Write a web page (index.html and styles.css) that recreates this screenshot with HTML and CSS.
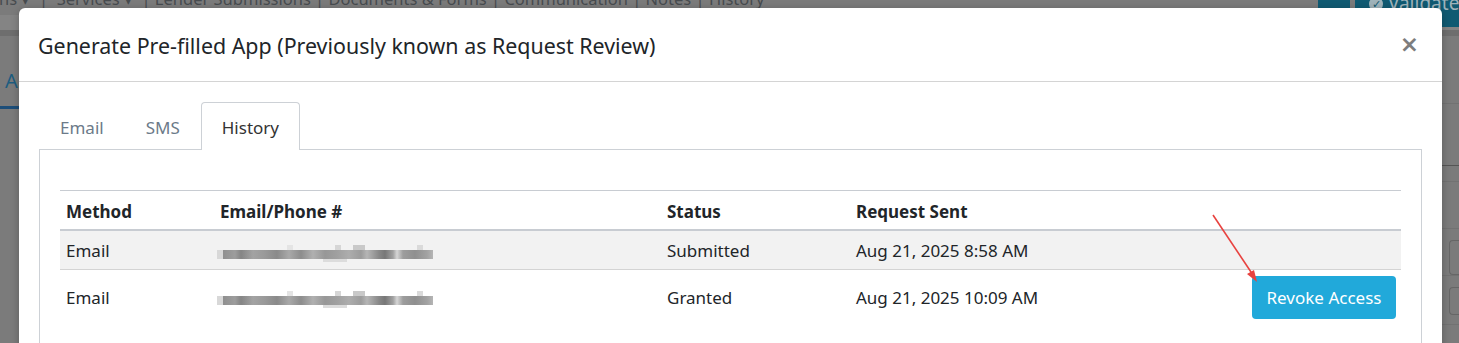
FILE: index.html
```html
<!DOCTYPE html>
<html lang="en">
<head>
    <meta charset="UTF-8">
    <meta name="viewport" content="width=device-width, initial-scale=1.0">
    <title>Generate Pre-filled App</title>
    <link rel="stylesheet" href="styles.css">
</head>
<body>
    <div class="page">
        <div class="topbar">
            <div class="nav-links">ns &#9662; &nbsp;|&nbsp; Services &#9662; &nbsp;|&nbsp;Lender Submissions&nbsp;|&nbsp;Documents &amp; Forms&nbsp;|&nbsp;Communication&nbsp;|&nbsp;Notes&nbsp;|&nbsp;History</div>
            <div class="top-actions">
                <div class="btn-icon"></div>
                <div class="btn-validate"><span class="check">&#10003;</span> Validate</div>
            </div>
        </div>
        <div class="subbar"></div>
        <div class="page-tabs"><span class="page-tab">A</span></div>
        <div class="side-lines">
            <div class="line l1"></div>
            <div class="line l2"></div>
            <div class="line l3"></div>
            <div class="line l4"></div>
            <div class="box b1"></div>
            <div class="line l5"></div>
            <div class="box b2"></div>
            <div class="line l6"></div>
        </div>
    </div>

    <div class="modal">
        <div class="modal-header">
            <h5 class="modal-title">Generate Pre-filled App (Previously known as Request Review)</h5>
            <button class="close">&times;</button>
        </div>
        <div class="modal-body">
            <ul class="tabs">
                <li class="tab">Email</li>
                <li class="tab">SMS</li>
                <li class="tab active">History</li>
            </ul>
            <div class="tab-content">
                <table class="history">
                    <colgroup>
                        <col class="c-method">
                        <col class="c-email">
                        <col class="c-status">
                        <col class="c-sent">
                        <col>
                    </colgroup>
                    <thead>
                        <tr>
                            <th>Method</th>
                            <th>Email/Phone #</th>
                            <th>Status</th>
                            <th>Request Sent</th>
                            <th></th>
                        </tr>
                    </thead>
                    <tbody>
                        <tr class="striped">
                            <td>Email</td>
                            <td><span class="blurred"></span></td>
                            <td>Submitted</td>
                            <td>Aug 21, 2025 8:58 AM</td>
                            <td></td>
                        </tr>
                        <tr>
                            <td>Email</td>
                            <td><span class="blurred"></span></td>
                            <td>Granted</td>
                            <td>Aug 21, 2025 10:09 AM</td>
                            <td class="action"><button class="btn-revoke">Revoke Access</button></td>
                        </tr>
                    </tbody>
                </table>
            </div>
        </div>
        <svg class="arrow" width="60" height="80" viewBox="0 0 60 80">
            <line x1="2" y1="1" x2="42" y2="61" stroke="#e8423f" stroke-width="1.6"/>
            <polygon points="46,68 36,60 43,56" fill="#e8423f"/>
        </svg>
    </div>
</body>
</html>
```

FILE: styles.css
```css
html, body {
    margin: 0;
    padding: 0;
    height: 100%;
    overflow: hidden;
}
body {
    background-color: #7b7b7b;
    font-family: "Segoe UI", "Noto Sans", "Open Sans", sans-serif;
    color: #212529;
}

/* dimmed page behind the modal */
.page {
    position: relative;
    height: 343px;
}
.topbar {
    display: flex;
    justify-content: space-between;
    height: 27px;
    margin-top: -12px;
}
.nav-links {
    font-size: 16.5px;
    color: #474b4f;
    line-height: 22px;
    white-space: nowrap;
    margin-left: -1px;
}
.top-actions {
    display: flex;
    gap: 5px;
    flex-shrink: 0;
}
.btn-icon {
    width: 32px;
    height: 39px;
    background-color: #105a72;
}
.btn-validate {
    box-sizing: border-box;
    width: 110px;
    height: 39px;
    background-color: #105a72;
    color: #9fb3ba;
    font-size: 19px;
    line-height: 30px;
    padding-left: 14px;
    margin-right: -6px;
    white-space: nowrap;
    overflow: hidden;
}
.check {
    display: inline-block;
    width: 14px;
    height: 14px;
    border-radius: 50%;
    background-color: #9fb3ba;
    color: #105a72;
    font-size: 11px;
    line-height: 14px;
    text-align: center;
    vertical-align: 2px;
}
.subbar {
    height: 15px;
    background-color: #848484;
    border-bottom: 6px solid #6e6e6e;
}
.page-tabs {
    margin-top: 30px;
    height: 40px;
    border-bottom: 3px solid #1d4e79;
    width: 19px;
}
.page-tab {
    font-size: 20px;
    color: #1e5d80;
    padding-left: 5px;
    line-height: 30px;
}
.side-lines {
    position: absolute;
    right: 0;
    top: 115px;
    width: 17px;
    height: 228px;
}
.line {
    border-top: 1px solid #727272;
    height: 0;
}
.l1 { margin-top: 0; }
.l2 { margin-top: 61px; border-color: #555; }
.l3 { margin-top: 15px; }
.l4 { margin-top: 46px; }
.l5 { margin-top: 0; }
.l6 { margin-top: 9px; }
.box {
    border: 1px solid #666;
    border-right: 0;
    border-radius: 4px 0 0 4px;
    height: 33px;
    margin-left: 7px;
}
.b1 { margin-top: 11px; }
.b2 { margin-top: 11px; height: 26px; }

/* modal */
.modal {
    position: absolute;
    left: 19px;
    top: 8px;
    width: 1423px;
    height: 400px;
    background-color: #fff;
    border-radius: 6px;
    box-shadow: 0 2px 8px rgba(0, 0, 0, 0.25);
}
.modal-header {
    display: flex;
    align-items: center;
    justify-content: space-between;
    height: 73px;
    padding: 0 19px;
    border-bottom: 1px solid #d4d4d4;
}
.modal-title {
    margin: 0;
    font-size: 21.4px;
    font-weight: 400;
    color: #212529;
    padding-top: 2px;
}
.close {
    border: 0;
    background: none;
    font-size: 23px;
    font-weight: 700;
    color: #7d7d7d;
    padding: 0;
    margin-right: 4px;
    font-family: "DejaVu Sans", sans-serif;
    line-height: 1;
}
.modal-body {
    padding: 20px;
}
.tabs {
    display: flex;
    list-style: none;
    margin: 0;
    padding: 0;
    height: 47px;
}
.tab {
    padding: 0 20px;
    line-height: 49px;
    font-size: 17px;
    color: #6c7a89;
    border: 1px solid transparent;
    border-bottom: 0;
    border-radius: 4px 4px 0 0;
}
.tab.active {
    color: #333;
    border-color: #cdd1d6;
    background-color: #fff;
    height: 47px;
}
.tab-content {
    border: 1px solid #cdd1d6;
    padding: 40px 20px 20px;
}

/* history table */
.history {
    width: 100%;
    border-collapse: collapse;
    table-layout: fixed;
    font-size: 17px;
}
.c-method { width: 154px; }
.c-email { width: 447px; }
.c-status { width: 189px; }
.c-sent { width: 300px; }
.history th,
.history td {
    text-align: left;
    padding: 9px 6px 7px;
    line-height: 22px;
    vertical-align: middle;
}
.history thead th {
    font-weight: 700;
    border-top: 1px solid #c8ccd2;
    border-bottom: 2px solid #c8ccd2;
    padding: 10px 6px 6px;
}
.history tbody td {
    border-bottom: 1px solid #d4d4d4;
}
.history tbody tr:last-child td {
    border-bottom: 0;
    padding-top: 6px;
}
.striped {
    background-color: #f2f2f2;
}
.blurred {
    display: inline-block;
    width: 216px;
    height: 19px;
    margin-left: -3px;
    vertical-align: middle;
    background:
        linear-gradient(90deg, transparent 70px, #e4e4e4 70px, #e4e4e4 76px, transparent 76px, transparent 118px, #d6d6d6 118px, #d6d6d6 124px, transparent 124px, transparent 136px, #c9c9c9 136px, #c9c9c9 148px, transparent 148px, transparent 200px, #dadada 200px, #dadada 206px, transparent 206px) 0 2px / 216px 5px no-repeat,
        linear-gradient(90deg, #d8d8d8 0, #d8d8d8 6px, #8f8f8f 6px, #9d9d9d 18px, #858585 24px, #a3a3a3 36px, #999 48px, #8a8a8a 60px, #a9a9a9 72px, #8d8d8d 84px, #b0b0b0 96px, #979797 108px, #a0a0a0 120px, #adadad 132px, #9c9c9c 144px, #b6b6b6 150px, #888 162px, #777 168px, #a1a1a1 176px, #d6d6d6 180px, #9d9d9d 186px, #8f8f8f 198px, #a2a2a2 210px, #b5b5b5 216px) 0 7px / 216px 9px no-repeat,
        linear-gradient(90deg, transparent 106px, #dcdcdc 106px, #dcdcdc 130px, transparent 130px) 0 16px / 216px 3px no-repeat;
}
.action {
    text-align: right !important;
}
.btn-revoke {
    background-color: #21a9da;
    color: #fff;
    border: 0;
    border-radius: 4px;
    font-family: inherit;
    font-size: 17px;
    width: 144px;
    height: 43px;
    margin-right: -1px;
}
.arrow {
    position: absolute;
    left: 1192px;
    top: 206px;
}
```
